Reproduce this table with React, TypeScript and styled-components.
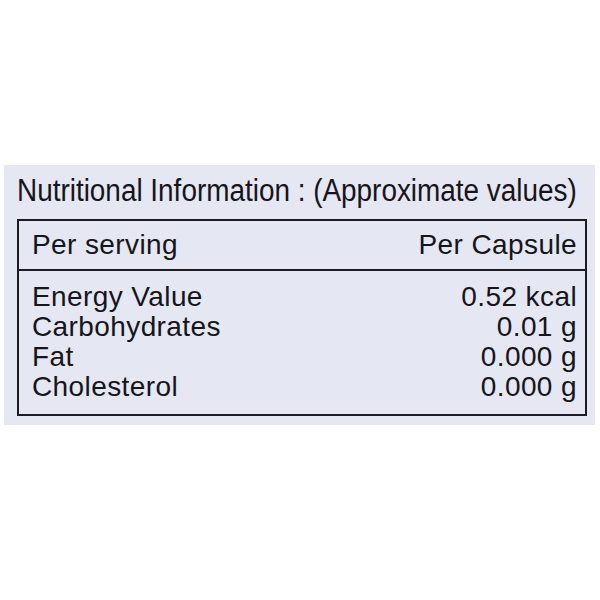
import styled, { createGlobalStyle } from 'styled-components';

const GlobalStyle = createGlobalStyle`
  body {
    margin: 0;
    background: #fff;
    font-family: "Liberation Sans", Arial, sans-serif;
  }
`;

const Panel = styled.div`
  margin: 165px 0 0 4px;
  width: 591px;
  height: 260px;
  box-sizing: border-box;
  background: #e5e7f3;
  padding: 4px 8px 0 13px;
  color: #15151c;
  overflow: hidden;
`;

const Title = styled.h1`
  margin: 0 0 6px;
  font-size: 31px;
  font-weight: 400;
  line-height: 44px;
  white-space: nowrap;
`;

// title type on the label is condensed
const Narrow = styled.span`
  display: inline-block;
  transform: scaleX(0.9);
  transform-origin: left center;
`;

const Table = styled.table`
  width: 570px;
  border-collapse: collapse;
  border: 2px solid #1b1b22;
`;

const HeadCell = styled.th<{ $right?: boolean }>`
  font-size: 28px;
  font-weight: 400;
  letter-spacing: 0.4px;
  text-align: ${(p) => (p.$right ? 'right' : 'left')};
  padding: 6px 8px 6px 13px;
  height: 36px;
  border-bottom: 2px solid #1b1b22;
`;

const Cell = styled.td<{ $right?: boolean }>`
  font-size: 28px;
  line-height: 30px;
  letter-spacing: 0.4px;
  text-align: ${(p) => (p.$right ? 'right' : 'left')};
  padding: 11px 8px 12px 13px;
  vertical-align: top;
`;

const Line = styled.div`
  white-space: nowrap;
`;

const rows = [
  { name: 'Energy Value', value: '0.52 kcal' },
  { name: 'Carbohydrates', value: '0.01 g' },
  { name: 'Fat', value: '0.000 g' },
  { name: 'Cholesterol', value: '0.000 g' },
];

export default function App() {
  return (
    <>
      <GlobalStyle />
      <Panel>
        <Title>
          <Narrow>Nutritional Information : (Approximate values)</Narrow>
        </Title>
        <Table>
          <thead>
            <tr>
              <HeadCell>Per serving</HeadCell>
              <HeadCell $right>Per Capsule</HeadCell>
            </tr>
          </thead>
          <tbody>
            <tr>
              <Cell>
                {rows.map((r) => (
                  <Line key={r.name}>{r.name}</Line>
                ))}
              </Cell>
              <Cell $right>
                {rows.map((r) => (
                  <Line key={r.name}>{r.value}</Line>
                ))}
              </Cell>
            </tr>
          </tbody>
        </Table>
      </Panel>
    </>
  );
}
